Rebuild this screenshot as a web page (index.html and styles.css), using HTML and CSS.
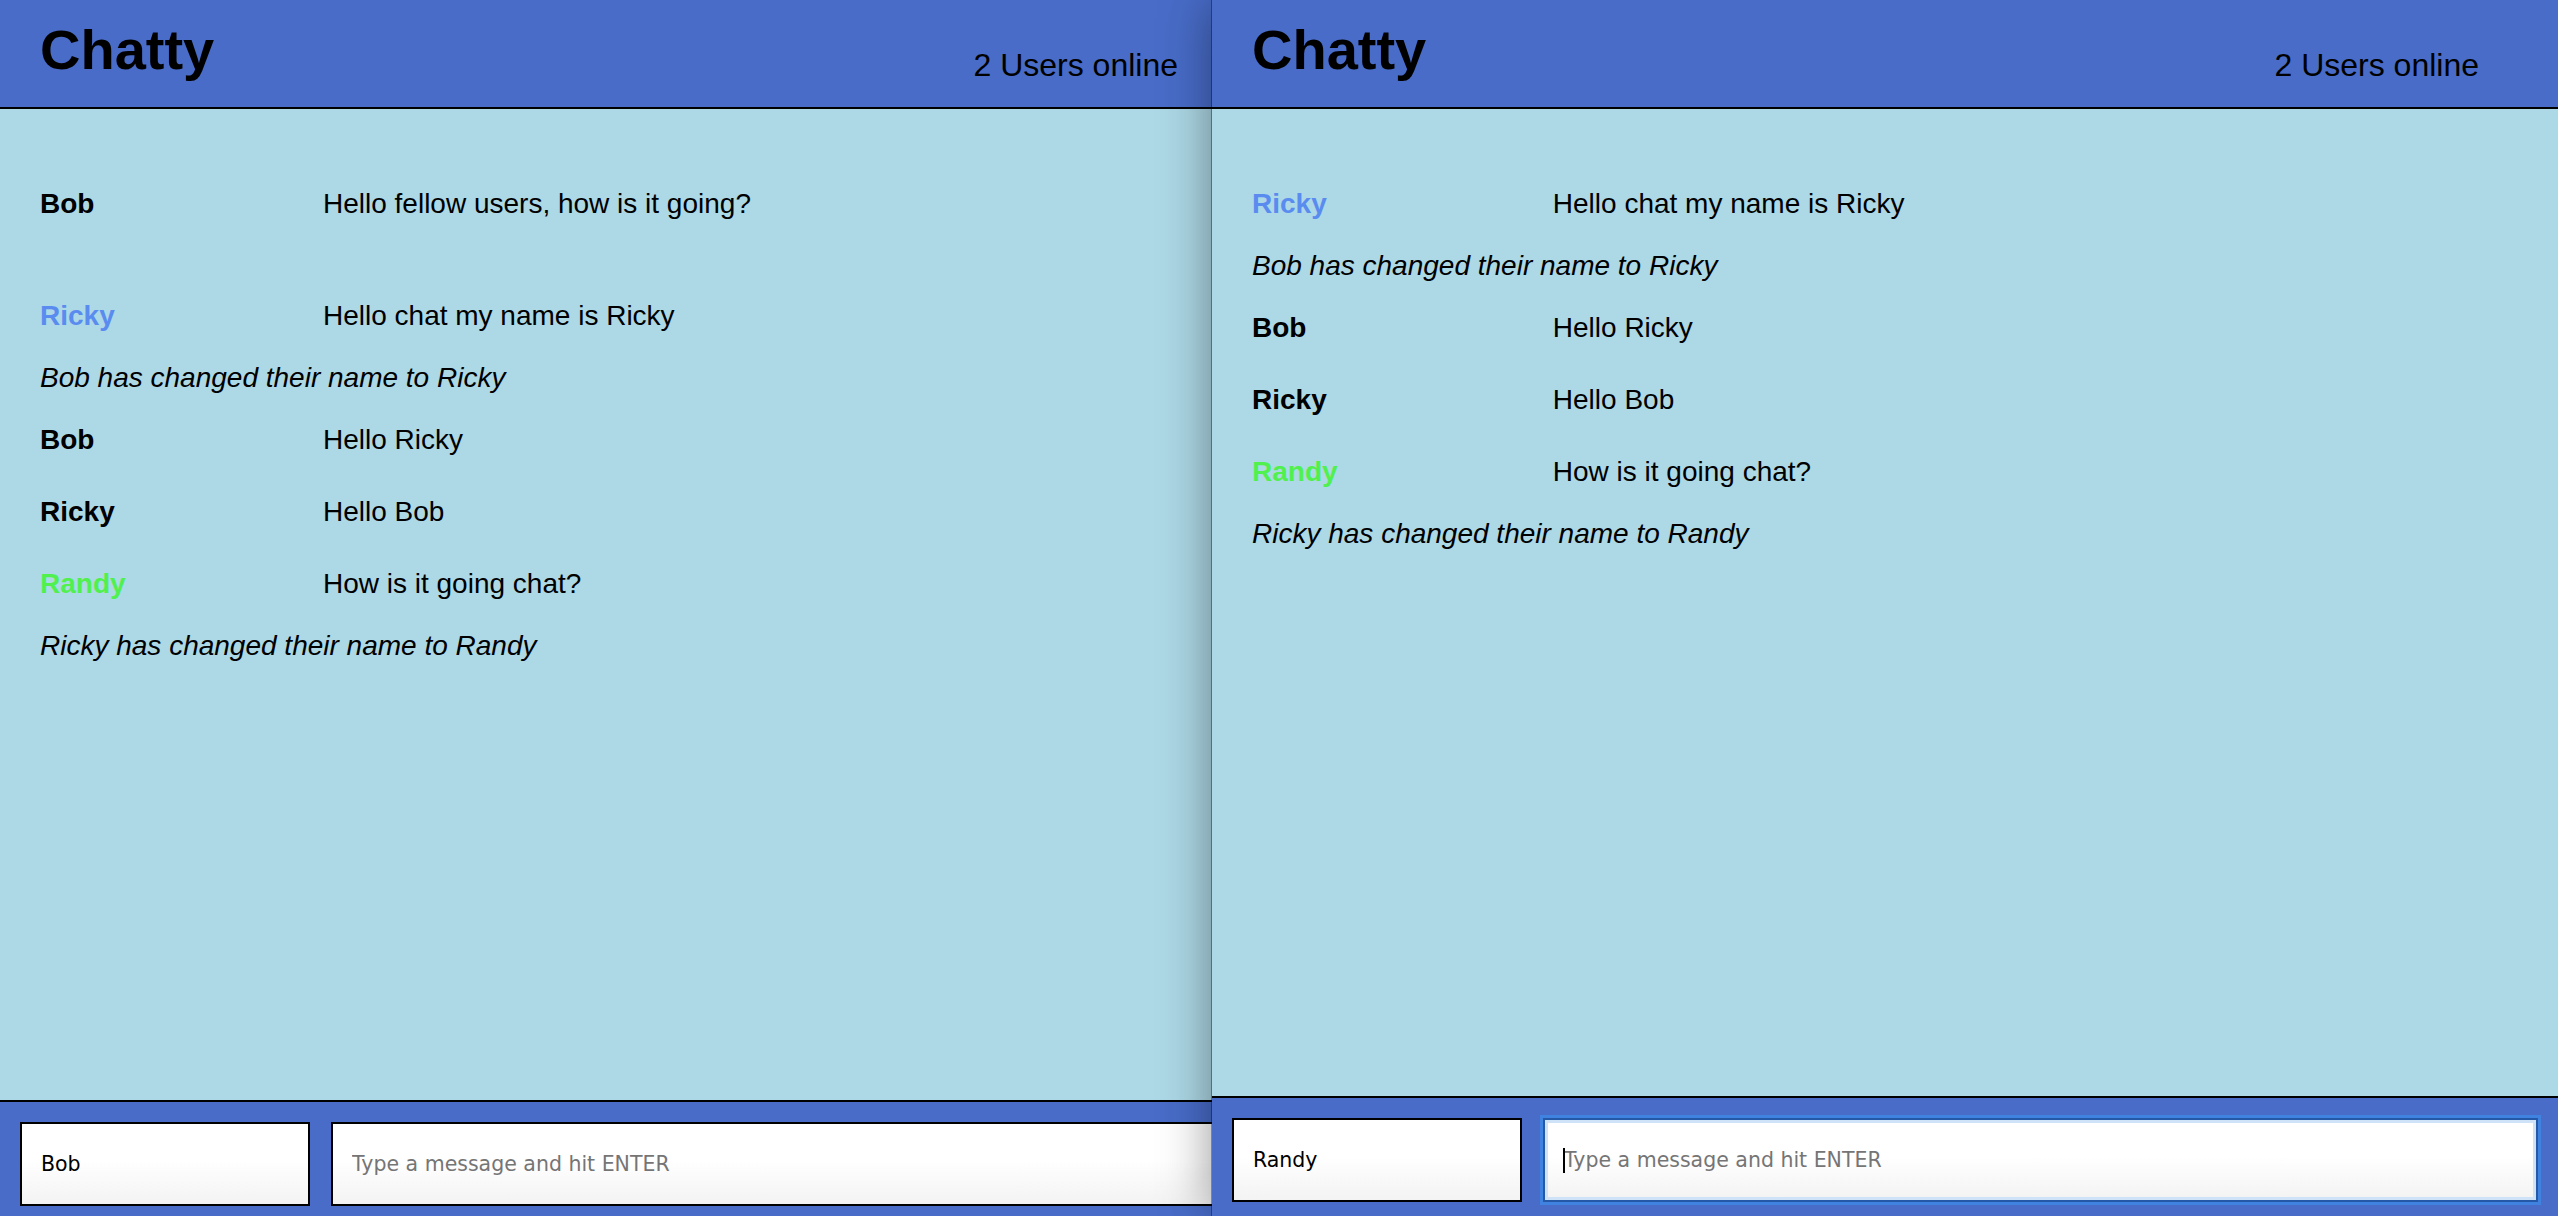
FILE: index.html
```html
<!DOCTYPE html>
<html lang="en">
<head>
<meta charset="utf-8">
<title>Chatty</title>
<link rel="stylesheet" href="styles.css">
</head>
<body>
<div class="desktop">
  <div class="window window--back">
    <div class="app app--back">
      <nav class="navbar">
        <h1 class="navbar-brand">Chatty</h1>
        <span class="navbar-users">2 Users online</span>
      </nav>
      <main class="messages">
        <div class="message">
          <span class="message-username">Bob</span>
          <span class="message-content">Hello fellow users, how is it going?</span>
        </div>
        <div class="message message--empty">
          <span class="message-username"></span>
          <span class="message-content"></span>
        </div>
        <div class="message">
          <span class="message-username user-blue">Ricky</span>
          <span class="message-content">Hello chat my name is Ricky</span>
        </div>
        <div class="notification">Bob has changed their name to Ricky</div>
        <div class="message">
          <span class="message-username">Bob</span>
          <span class="message-content">Hello Ricky</span>
        </div>
        <div class="message">
          <span class="message-username">Ricky</span>
          <span class="message-content">Hello Bob</span>
        </div>
        <div class="message">
          <span class="message-username user-green">Randy</span>
          <span class="message-content">How is it going chat?</span>
        </div>
        <div class="notification">Ricky has changed their name to Randy</div>
      </main>
      <footer class="chatbar">
        <input class="chatbar-username" type="text" value="Bob">
        <div class="chatbar-field">
          <input class="chatbar-message" type="text" placeholder="Type a message and hit ENTER">
        </div>
      </footer>
    </div>
  </div>

  <div class="window window--front">
    <div class="app app--front">
      <nav class="navbar">
        <h1 class="navbar-brand">Chatty</h1>
        <span class="navbar-users">2 Users online</span>
      </nav>
      <main class="messages">
        <div class="message">
          <span class="message-username user-blue">Ricky</span>
          <span class="message-content">Hello chat my name is Ricky</span>
        </div>
        <div class="notification">Bob has changed their name to Ricky</div>
        <div class="message">
          <span class="message-username">Bob</span>
          <span class="message-content">Hello Ricky</span>
        </div>
        <div class="message">
          <span class="message-username">Ricky</span>
          <span class="message-content">Hello Bob</span>
        </div>
        <div class="message">
          <span class="message-username user-green">Randy</span>
          <span class="message-content">How is it going chat?</span>
        </div>
        <div class="notification">Ricky has changed their name to Randy</div>
      </main>
      <footer class="chatbar">
        <input class="chatbar-username" type="text" value="Randy">
        <div class="chatbar-field chatbar-field--focused">
          <input class="chatbar-message" type="text" placeholder="Type a message and hit ENTER">
          <span class="caret"></span>
        </div>
      </footer>
    </div>
  </div>
</div>
</body>
</html>
```

FILE: styles.css
```css
* {
  box-sizing: border-box;
}

html, body {
  margin: 0;
  padding: 0;
  width: 2558px;
  height: 1216px;
  overflow: hidden;
  background: #add8e6;
  font-family: "Liberation Sans", Arial, Helvetica, sans-serif;
  color: #000;
}

.desktop {
  display: flex;
  width: 2558px;
  height: 1216px;
  overflow: hidden;
}

.window {
  flex-shrink: 0;
  height: 1216px;
  overflow: hidden;
}

.window--back {
  width: 1212px;
}

.window--front {
  width: 1346px;
  position: relative;
  z-index: 1;
  box-shadow: -1px 0 0 rgba(0, 0, 0, 0.35), 0 0 48px rgba(0, 0, 0, 0.42);
}

.app {
  display: flex;
  flex-direction: column;
  background: #add8e6;
}

.app--back {
  width: 1271px;
  height: 1226px;
}

.app--front {
  width: 1346px;
  height: 1222px;
}

/* header */
.navbar {
  display: flex;
  justify-content: space-between;
  align-items: flex-start;
  height: 109px;
  padding: 22px 79px 0 40px;
  background: #486cc8;
  border-bottom: 2px solid #000;
  flex-shrink: 0;
}

.app--back .navbar {
  padding-right: 93px;
}

.navbar-brand {
  margin: 0;
  font-size: 56px;
  line-height: 56px;
  font-weight: bold;
}

.navbar-users {
  margin-top: 27px;
  font-size: 32px;
  line-height: 32px;
}

/* messages */
.messages {
  flex: 1;
  padding-top: 59px;
  font-size: 28px;
  line-height: 32px;
}

.message {
  display: flex;
  padding: 20px 40px;
}

.message-username {
  width: 23.76%;
  flex-shrink: 0;
  font-weight: bold;
}

.message-content {
  flex: 1;
}

.user-blue {
  color: #5a8cf0;
}

.user-green {
  color: #50f04e;
}

.notification {
  padding: 10px 40px;
  font-style: italic;
}

/* footer */
.chatbar {
  display: flex;
  gap: 21px;
  padding: 20px;
  background: #486cc8;
  border-top: 2px solid #000;
  flex-shrink: 0;
}

.chatbar-username,
.chatbar-message {
  height: 84px;
  margin: 0;
  padding: 0 19px;
  border: 2px solid #000;
  border-radius: 0;
  background: linear-gradient(to bottom, #ffffff 45%, #f3f3f3 100%);
  font-family: "DejaVu Sans", "Liberation Sans", sans-serif;
  font-size: 20.5px;
  color: #000;
  outline: none;
}

.chatbar-username {
  width: 290px;
  flex-shrink: 0;
}

.chatbar-field {
  flex: 1;
  position: relative;
  display: flex;
}

.chatbar-message {
  width: 100%;
}

.chatbar-message::placeholder {
  color: #757575;
  opacity: 1;
}

.chatbar-field--focused .chatbar-message {
  border-color: #2559a8;
  box-shadow: 0 0 0 3px #3f82e0, inset 0 0 0 3px #cfe3f8;
}

.caret {
  position: absolute;
  left: 20px;
  top: 30px;
  width: 2px;
  height: 25px;
  background: #000;
}
```
